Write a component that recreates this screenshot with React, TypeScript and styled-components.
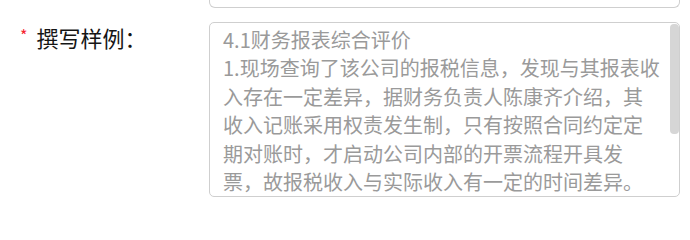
import React from "react";
import styled, { createGlobalStyle } from "styled-components";

const GlobalStyle = createGlobalStyle`
  html, body {
    margin: 0;
    padding: 0;
    background: #fff;
  }
  body {
    font-family: "Noto Sans CJK SC", "Noto Sans", sans-serif;
  }
`;

const Page = styled.div`
  width: 690px;
  height: 220px;
  overflow: hidden;
  padding-right: 10px;
  box-sizing: border-box;
`;

const Row = styled.div<{ $gap?: number }>`
  display: grid;
  grid-template-columns: 209px 1fr;
  margin-top: ${(p) => p.$gap ?? 0}px;
`;

// tail of the field above, cut off by the top of the view
const PrevField = styled.div`
  grid-column: 2;
  height: 7px;
  border: 1px solid #cfcfcf;
  border-top: none;
  border-radius: 0 0 6px 6px;
`;

const Label = styled.label`
  display: flex;
  align-items: flex-start;
  padding: 1px 0 0 20px;
  font-size: 22px;
  line-height: 28px;
  color: #151515;

  span {
    color: #f5222d;
    font-size: 16px;
    line-height: 20px;
    margin-right: 9px;
    margin-top: 2px;
  }
`;

const Box = styled.div`
  position: relative;
  height: 175px;
  border: 1px solid #cfcfcf;
  border-radius: 5px;
  overflow: hidden;
  box-sizing: border-box;
`;

const Text = styled.div`
  width: 439px;
  padding: 3px 0 0 13px;
  font-size: 20px;
  line-height: 28.4px;
  color: #9a9a9a;
  white-space: pre-wrap;
`;

const Thumb = styled.div`
  position: absolute;
  top: 1px;
  right: 0;
  width: 9px;
  height: 110px;
  border-radius: 4px;
  background: #d6d6d6;
`;

const sample =
  "4.1财务报表综合评价\n1.现场查询了该公司的报税信息，发现与其报表收入存在一定差异，据财务负责人陈康齐介绍，其收入记账采用权责发生制，只有按照合同约定定期对账时，才启动公司内部的开票流程开具发票，故报税收入与实际收入有一定的时间差异。\n2.经核实，该公司报表数据与纳税申报数据基本一致。";

export default function App() {
  return (
    <Page>
      <GlobalStyle />
      <Row>
        <PrevField />
      </Row>
      <Row $gap={14}>
        <Label>
          <span>*</span>撰写样例：
        </Label>
        <Box>
          <Text>{sample}</Text>
          <Thumb />
        </Box>
      </Row>
    </Page>
  );
}
